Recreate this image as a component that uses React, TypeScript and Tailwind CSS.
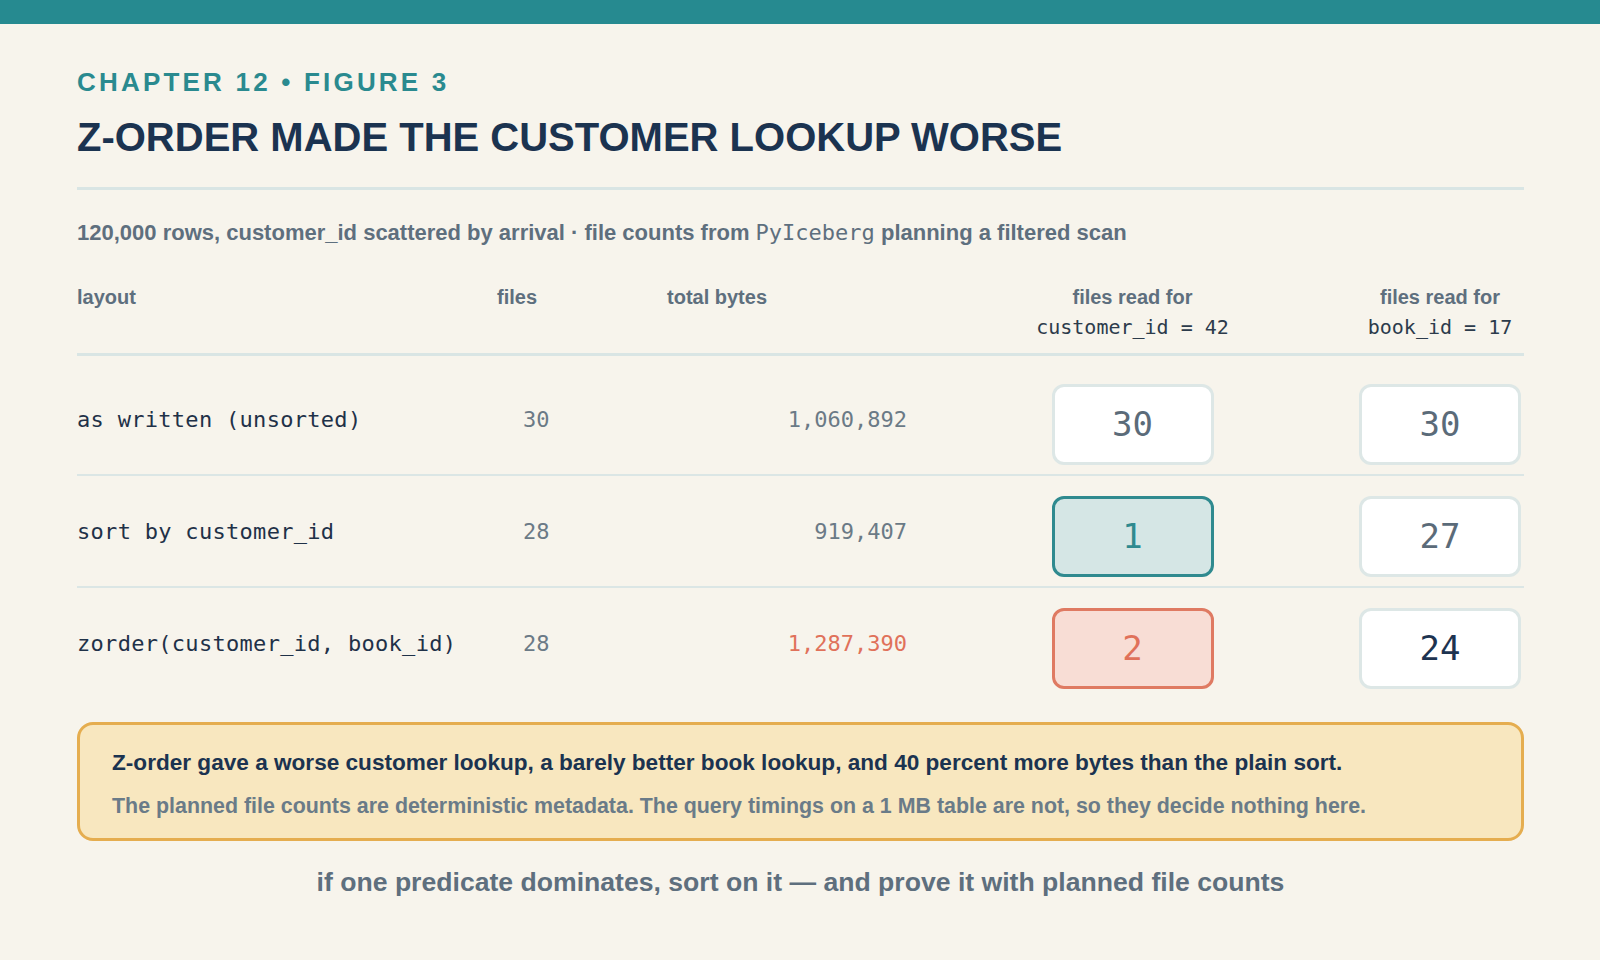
const rows = [
  {
    layout: 'as written (unsorted)',
    files: '30',
    bytes: '1,060,892',
    bytesHot: false,
    cust: { value: '30', tone: 'plain' },
    book: { value: '30', tone: 'plain' },
  },
  {
    layout: 'sort by customer_id',
    files: '28',
    bytes: '919,407',
    bytesHot: false,
    cust: { value: '1', tone: 'good' },
    book: { value: '27', tone: 'plain' },
  },
  {
    layout: 'zorder(customer_id, book_id)',
    files: '28',
    bytes: '1,287,390',
    bytesHot: true,
    cust: { value: '2', tone: 'bad' },
    book: { value: '24', tone: 'dark' },
  },
]

const mono = "font-['DejaVu_Sans_Mono','Liberation_Mono',monospace]"

function CountBox({ value, tone, edge }: { value: string; tone: string; edge: string }) {
  const toneClass =
    tone === 'good'
      ? 'border-[#2f8a8f] bg-[#d5e6e5] text-[#2f8a8f]'
      : tone === 'bad'
        ? 'border-[#df7a62] bg-[#f8ddd5] text-[#e0715a]'
        : tone === 'dark'
          ? 'border-[#dde7e6] bg-white text-[#1d3350]'
          : 'border-[#dde7e6] bg-white text-[#5b6b79]'

  return (
    <div
      className={`justify-self-end ${edge} mt-[10px] w-[162px] h-[81px] rounded-[12px] border-[3px] flex items-center justify-center text-[34px] ${mono} ${toneClass}`}
    >
      {value}
    </div>
  )
}

export default function App() {
  return (
    <div className="min-h-screen w-full bg-[#f7f4ec] font-['Liberation_Sans',Arial,sans-serif]">
      <div className="h-[24px] bg-[#268a90]" />

      <div className="pl-[77px] pr-[76px] pt-[42px]">
        <div className="text-[26px] leading-[32px] font-bold tracking-[3.2px] text-[#2a8a8f]">
          CHAPTER 12 • FIGURE 3
        </div>
        <h1 className="mt-[15px] text-[40px] leading-[48px] font-bold text-[#1b3350]">
          Z-ORDER MADE THE CUSTOMER LOOKUP WORSE
        </h1>
        <div className="mt-[26px] h-[3px] bg-[#d9e5e4]" />

        <p className="mt-[28px] text-[22px] leading-[30px] font-bold text-[#5e6f7e]">
          120,000 rows, customer_id scattered by arrival · file counts from{' '}
          <span className={`${mono} font-normal`}>PyIceberg</span> planning a filtered scan
        </p>

        {/* table header */}
        <div className="mt-[34px] grid grid-cols-[420px_170px_240px_1fr_1fr] pb-[11px] border-b-[3px] border-[#d9e5e4] text-[20px] leading-[30px] font-bold text-[#5e6f7e]">
          <div>layout</div>
          <div>files</div>
          <div>total bytes</div>
          <div className="justify-self-end mr-[2px] w-[162px] flex flex-col items-center">
            <span>files read for</span>
            <span className={`${mono} font-normal text-[#2c3b4b] whitespace-nowrap`}>customer_id = 42</span>
          </div>
          <div className="justify-self-end mr-[3px] w-[162px] flex flex-col items-center">
            <span>files read for</span>
            <span className={`${mono} font-normal text-[#2c3b4b] whitespace-nowrap`}>book_id = 17</span>
          </div>
        </div>

        {/* rows */}
        <div className="mt-[8px]">
          {rows.map((r, i) => (
            <div
              key={r.layout}
              className={`grid grid-cols-[420px_170px_240px_1fr_1fr] h-[110px] items-center ${
                i < rows.length - 1 ? 'border-b-2 border-[#dbe6e5] box-content' : ''
              }`}
            >
              <div className={`${mono} text-[22px] tracking-[0.3px] text-[#1f3148] whitespace-nowrap`}>{r.layout}</div>
              <div className={`${mono} text-[22px] pl-[26px] text-[#6b7a86]`}>{r.files}</div>
              <div className={`${mono} text-[22px] text-right ${r.bytesHot ? 'text-[#e0715a]' : 'text-[#6b7a86]'}`}>
                {r.bytes}
              </div>
              <CountBox value={r.cust.value} tone={r.cust.tone} edge="mr-[2px]" />
              <CountBox value={r.book.value} tone={r.book.tone} edge="mr-[3px]" />
            </div>
          ))}
        </div>

        {/* callout */}
        <div className="mt-[24px] rounded-[16px] border-[3px] border-[#e5ad4f] bg-[#f8e7bf] pl-[32px] pr-[24px] pt-[24px] pb-[18px]">
          <p className="text-[22.6px] leading-[28px] font-bold text-[#1b3350] whitespace-nowrap">
            Z-order gave a worse customer lookup, a barely better book lookup, and 40 percent more bytes than the plain sort.
          </p>
          <p className="mt-[15px] text-[21.4px] leading-[28px] font-bold text-[#6a7b88] whitespace-nowrap">
            The planned file counts are deterministic metadata. The query timings on a 1 MB table are not, so they decide nothing here.
          </p>
        </div>

        <p className="mt-[25px] text-center text-[26.6px] leading-[32px] font-bold text-[#5e6f7e]">
          if one predicate dominates, sort on it — and prove it with planned file counts
        </p>
      </div>
    </div>
  )
}
